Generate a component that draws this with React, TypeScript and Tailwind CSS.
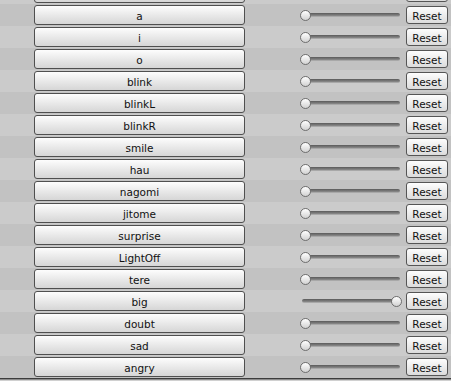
const morphs: { name: string; value: number }[] = [
  { name: "", value: 0 },
  { name: "a", value: 0 },
  { name: "i", value: 0 },
  { name: "o", value: 0 },
  { name: "blink", value: 0 },
  { name: "blinkL", value: 0 },
  { name: "blinkR", value: 0 },
  { name: "smile", value: 0 },
  { name: "hau", value: 0 },
  { name: "nagomi", value: 0 },
  { name: "jitome", value: 0 },
  { name: "surprise", value: 0 },
  { name: "LightOff", value: 0 },
  { name: "tere", value: 0 },
  { name: "big", value: 1 },
  { name: "doubt", value: 0 },
  { name: "sad", value: 0 },
  { name: "angry", value: 0 },
];

const Slider = ({ value }: { value: number }) => {
  return (
    <div className="relative w-[102px] h-[12px]">
      {/* track */}
      <div className="absolute left-[2px] right-[2px] top-[4px] h-[4px] rounded-full bg-gradient-to-b from-[#5a5a5a] to-[#8c8c8c] border-b border-[#a8a8a8]" />
      {/* thumb */}
      <div
        className="absolute top-[1px] w-[11px] h-[11px] rounded-full border border-[#6e6e6e] bg-gradient-to-b from-[#ffffff] to-[#d2d2d2]"
        style={{ left: `${value * 91}px` }}
      />
    </div>
  );
};

const Row = ({ name, value, dark }: { name: string; value: number; dark: boolean }) => {
  // the first row is scrolled almost out of view, only its bottom edge shows
  const clipped = name === "";
  return (
    <div className={`flex items-center h-[22px] pl-[34px] pr-[3px] ${dark ? "bg-[#c2c2c2]" : "bg-[#cbcbcb]"}`}>
      <button className="w-[211px] h-[20px] pt-[2px] rounded-[3px] border border-[#4f4f4f] bg-gradient-to-b from-[#fdfdfd] to-[#d6d6d6] text-[10.5px] leading-none text-[#111111] flex items-center justify-center">
        {name}
      </button>
      <div className="flex-1" />
      <Slider value={value} />
      <button className="ml-[4px] w-[42px] h-[18px] pt-[2px] rounded-[3px] border border-[#555555] bg-gradient-to-b from-[#fdfdfd] to-[#dcdcdc] text-[10.5px] leading-none text-[#111111] flex items-center justify-center">
        {clipped ? "" : "Reset"}
      </button>
    </div>
  );
};

const App = () => {
  return (
    <div className="w-[451px] h-[381px] overflow-hidden bg-[#c8c8c8]" style={{ fontFamily: '"DejaVu Sans", "Liberation Sans", sans-serif' }}>
      <div className="-mt-[18px]">
        {morphs.map((m, i) => (
          <Row key={i} name={m.name} value={m.value} dark={i % 2 === 1} />
        ))}
      </div>

      {/* bottom edge */}
      <div className="h-[1px] bg-[#3c3c3c]" />
      <div className="h-[1px] bg-[#8c8c8c]" />
      <div className="h-[1px] bg-[#d0d0d0]" />
    </div>
  );
};

export default App;
